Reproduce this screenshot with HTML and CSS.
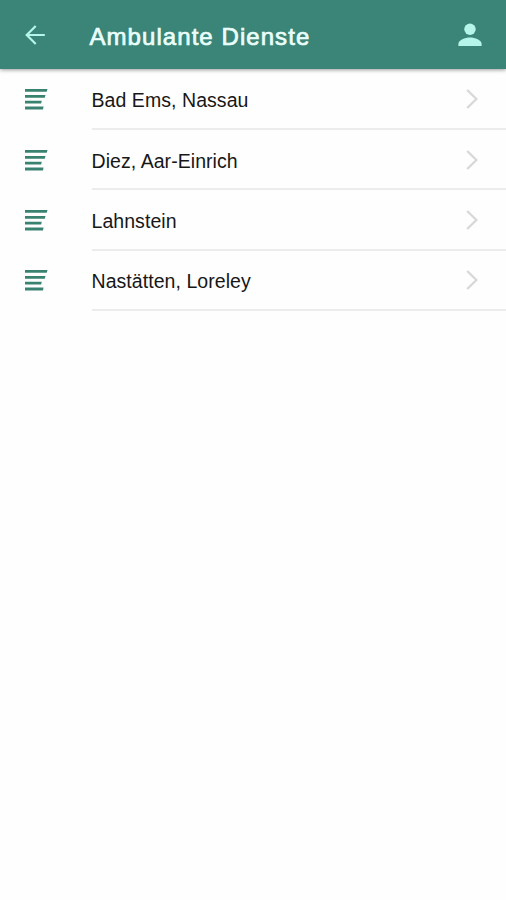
FILE: index.html
```html
<!DOCTYPE html>
<html lang="de">
<head>
<meta charset="utf-8">
<title>Ambulante Dienste</title>
<link rel="stylesheet" href="styles.css">
</head>
<body>
<svg class="defs" width="0" height="0" aria-hidden="true">
  <symbol id="lines" viewBox="0 0 23 21">
    <path d="M0 0h22.5l-.8 2.8H0zM0 6h20.5l-.7 2.7H0zM0 11.8h16.7l-.5 2.7H0zM0 17.6h18.5l-.5 2.9H0z" fill="currentColor"/>
  </symbol>
  <symbol id="chevron" viewBox="0 0 12 20">
    <path d="M1.2 1l9.2 9-9.2 9" fill="none" stroke="currentColor" stroke-width="2.4"/>
  </symbol>
</svg>
<header class="bar">
  <svg class="back" viewBox="0 0 20 20"><path d="M19.8 10H1.8M10.7 1L1.7 10l9 9" fill="none" stroke="currentColor" stroke-width="2.2"/></svg>
  <h1 class="title">Ambulante Dienste</h1>
  <svg class="user" viewBox="0 0 24 24"><circle cx="12" cy="6.2" r="5.7" fill="currentColor"/><path d="M.4 23v-2.2C.4 17 7 14.4 12 14.4S23.6 17 23.6 20.8V23z" fill="currentColor"/></svg>
</header>
<main class="list">
  <div class="row"><svg class="lines"><use href="#lines"/></svg><div class="item"><span class="label">Bad Ems, Nassau</span><svg class="chevron"><use href="#chevron"/></svg></div></div>
  <div class="row"><svg class="lines"><use href="#lines"/></svg><div class="item"><span class="label">Diez, Aar-Einrich</span><svg class="chevron"><use href="#chevron"/></svg></div></div>
  <div class="row"><svg class="lines"><use href="#lines"/></svg><div class="item"><span class="label">Lahnstein</span><svg class="chevron"><use href="#chevron"/></svg></div></div>
  <div class="row"><svg class="lines"><use href="#lines"/></svg><div class="item"><span class="label">Nastätten, Loreley</span><svg class="chevron"><use href="#chevron"/></svg></div></div>
</main>
</body>
</html>
```
FILE: styles.css
```css
* { box-sizing: border-box; }
body {
  margin: 0;
  min-height: 900px;
  background: #fefefe;
  color: #171717;
  font-family: "Liberation Sans", Arial, sans-serif;
}
.defs { display: block; height: 0; }
.bar {
  display: flex;
  align-items: center;
  height: 69px;
  padding: 1px 24px 0 25px;
  background: #3a8577;
  box-shadow: 0 1px 4px rgba(0, 0, 0, .4);
  color: #b5f5ea;
}
.back { width: 20px; height: 20px; margin-right: 44.5px; }
.title {
  flex: 1;
  margin: 0;
  padding-top: 4px;
  color: #eafffb;
  font-size: 24px;
  font-weight: 400;
  line-height: 32px;
  letter-spacing: 1.06px;
  -webkit-text-stroke: .7px #eafffb;
}
.user { width: 24px; height: 24px; }
.list { padding-top: .8px; }
.row {
  display: flex;
  align-items: center;
  height: 60.3px;
  padding-left: 25px;
}
.lines { width: 23px; height: 21px; margin-right: 44px; color: #3a8270; }
.item {
  display: flex;
  flex: 1;
  align-items: center;
  justify-content: space-between;
  height: 100%;
  padding-right: 28px;
  border-bottom: 2px solid #ececec;
  font-size: 19.5px;
}
.label {
  margin-left: -.5px;
  padding-top: 3px;
  line-height: 22px;
  letter-spacing: .06px;
}
.chevron { width: 12px; height: 20px; margin-top: 1px; color: #d8d8d8; }
```
